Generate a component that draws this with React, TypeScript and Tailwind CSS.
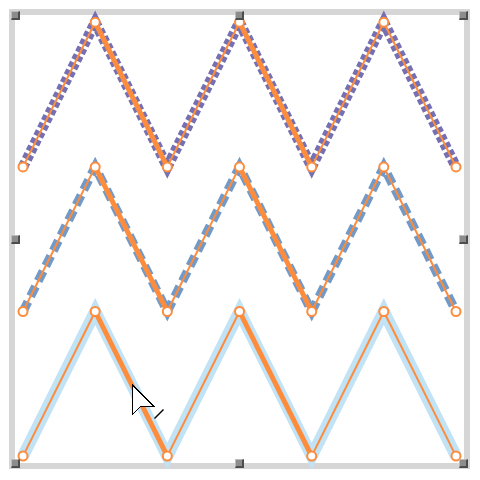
import React from 'react';

const XS = [23, 95.2, 167.3, 239.5, 311.7, 383.8, 456];
const TOP = 22.3;
const ROW = 144.6;

interface Row {
  color: string;
  width: number;
  dash?: string;
}

const rows: Row[] = [
  { color: '#7570b3', width: 10.5, dash: '5.5 3' },
  { color: '#729ac8', width: 9, dash: '11 6' },
  { color: '#c1e3f5', width: 12 },
];

const pointsFor = (r: number) =>
  XS.map((x, i) => [x, i % 2 === 1 ? TOP + r * ROW : TOP + (r + 1) * ROW] as [number, number]);

const Handle: React.FC<{ x: number; y: number }> = ({ x, y }) => (
  <div
    className="absolute w-[9px] h-[9px] bg-[#8c8c8c] border-t border-l border-t-[#bdbdbd] border-l-[#bdbdbd] border-b-2 border-r-2 border-b-[#4d4d4d] border-r-[#4d4d4d]"
    style={{ left: x, top: y }}
  />
);

const Zigzag: React.FC<{ row: Row; index: number }> = ({ row, index }) => {
  const pts = pointsFor(index);
  const d = pts.map((p) => p.join(',')).join(' ');
  return (
    <g>
      <polyline
        points={d}
        fill="none"
        stroke={row.color}
        strokeWidth={row.width}
        strokeDasharray={row.dash}
        strokeLinejoin="miter"
        strokeMiterlimit={10}
      />
      {pts.slice(0, -1).map((p, i) => {
        const q = pts[i + 1];
        const thick = i === 1 || i === 3;
        return (
          <line
            key={i}
            x1={p[0]}
            y1={p[1]}
            x2={q[0]}
            y2={q[1]}
            stroke="#fd8c3c"
            strokeWidth={thick ? 5 : 2}
          />
        );
      })}
      {pts.map((p, i) => (
        <circle key={i} cx={p[0]} cy={p[1]} r={4.5} fill="#fff" stroke="#fd8c3c" strokeWidth={2} />
      ))}
    </g>
  );
};

export default function App() {
  return (
    <div className="relative w-[480px] h-[480px] bg-white overflow-hidden p-[9px]">
      <div className="w-[461px] h-[460px] border-[6px] border-[#d6d6d6]" />
      <svg className="absolute inset-0" width={480} height={480} viewBox="0 0 480 480">
        {rows.map((row, i) => (
          <Zigzag key={i} row={row} index={i} />
        ))}
      </svg>
      {[11, 235, 459].map((y) =>
        [11, 235, 459].map((x) =>
          x === 235 && y === 235 ? null : <Handle key={`${x}-${y}`} x={x} y={y} />
        )
      )}
      <svg className="absolute left-0 top-0" width={480} height={480} viewBox="0 0 480 480">
        <path
          d="M132.5 385.5 L132.5 414.5 L140.5 406.5 L153.5 406.5 Z"
          fill="#fff"
          stroke="#000"
          strokeWidth={1.4}
          shapeRendering="crispEdges"
        />
        <line x1={154.5} y1={418.5} x2={163.5} y2={409.5} stroke="#000" strokeWidth={1.4} />
      </svg>
    </div>
  );
}
